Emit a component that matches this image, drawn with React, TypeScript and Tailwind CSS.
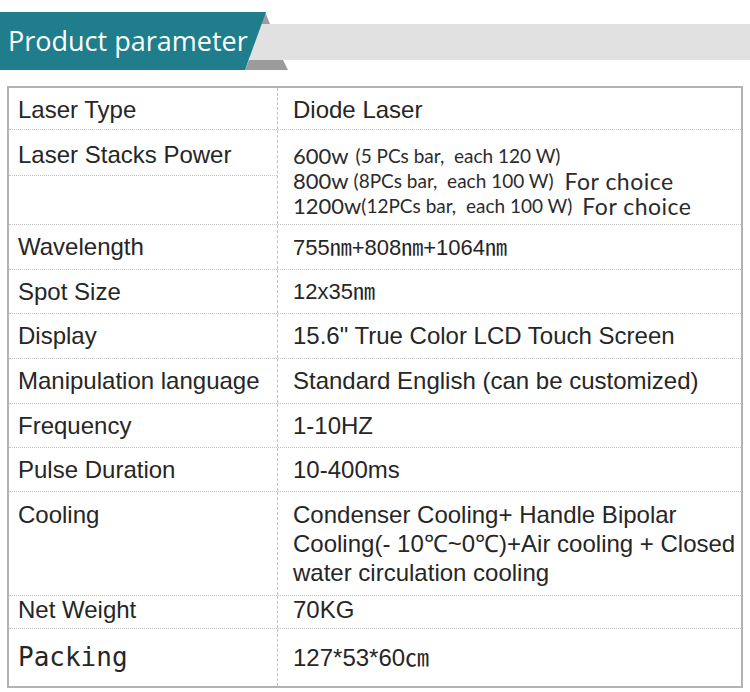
import React from 'react';

const line = 'border-b border-dotted border-[#c2c2c2]';
const left = 'w-[269px] shrink-0 border-r border-dashed border-[#c2c2c2] pl-[9px]';
const right = 'flex-1 pl-[15px]';

interface RowProps {
  label: React.ReactNode;
  value: React.ReactNode;
  h: string;
  last?: boolean;
  valueClass?: string;
  labelClass?: string;
}

const Row = ({ label, value, h, last, valueClass = '', labelClass = '' }: RowProps) => (
  <div className={`flex ${h} ${last ? '' : line}`}>
    <div className={`${left} flex items-center ${labelClass}`}>{label}</div>
    <div className={`${right} flex items-center ${valueClass}`}>{value}</div>
  </div>
);

const Header = () => (
  <div className="relative mt-[12px] h-[58px]">
    <svg className="absolute left-0 top-0" width="750" height="58" viewBox="0 0 750 58">
      <rect x="250" y="12" width="500" height="36" fill="#e1e1e1" />
      <polygon points="265,0 260,12 270,12" fill="#9c9c9c" />
      <polygon points="249,48 283,48 288,58 245,58" fill="#9c9c9c" />
      <polygon points="0,0 266,0 245,58 0,58" fill="#1f7d8c" />
    </svg>
    <div className="relative flex h-full items-center pl-[8px] font-['Open_Sans',sans-serif] text-[27px] text-white">
      Product parameter
    </div>
  </div>
);

export default function App() {
  const calibri = "font-['Lato','Noto_Sans_CJK_SC',sans-serif] text-[#2b2b2b]";
  const pline = 'flex h-[25px] items-center whitespace-nowrap leading-[22px]';
  return (
    <div className="h-[692px] w-[750px] overflow-hidden bg-white font-['Liberation_Sans',Arial,sans-serif] text-[24px] text-[#262626]">
      <Header />
      <div className="ml-[7px] mt-[16px] w-[736px] border-2 border-[#b3b3b3]">
        <Row h="h-[42px]" label="Laser Type" value="Diode Laser" labelClass="pt-[3px]" valueClass="pt-[3px]" />

        <div className={`flex h-[95px] ${line}`}>
          <div className="flex w-[269px] shrink-0 flex-col border-r border-dashed border-[#c2c2c2]">
            <div className={`flex h-[46px] items-center pl-[9px] pt-[4px] ${line}`}>Laser Stacks Power</div>
            <div className="flex-1" />
          </div>
          <div className={`${right} pt-[13px] ${calibri}`}>
            <div className={pline}>
              <span className="text-[22px]">600w</span>
              <span className="ml-[7px] text-[19px]">(5 PCs bar,&nbsp;&nbsp;each 120 W)</span>
            </div>
            <div className={pline}>
              <span className="text-[22px]">800w</span>
              <span className="ml-[5px] text-[19px]">(8PCs bar,&nbsp;&nbsp;each 100 W)</span>
              <span className="ml-[11px] text-[23px] tracking-[0.5px]">For choice</span>
            </div>
            <div className={pline}>
              <span className="text-[22px]">1200w</span>
              <span className="text-[19px]">(12PCs bar,&nbsp;&nbsp;each 100 W)</span>
              <span className="ml-[10px] text-[23px] tracking-[0.5px]">For choice</span>
            </div>
          </div>
        </div>

        <Row
          h="h-[45px]"
          label="Wavelength"
          value="755㎚+808㎚+1064㎚"
          valueClass="text-[22px] font-['Liberation_Sans','Noto_Sans_CJK_SC',sans-serif]"
        />
        <Row
          h="h-[44px]"
          label="Spot Size"
          value="12x35㎚"
          valueClass="text-[22px] font-['Liberation_Sans','Noto_Sans_CJK_SC',sans-serif]"
        />
        <Row h="h-[45px]" label="Display" value={'15.6" True Color LCD Touch Screen'} />
        <Row h="h-[45px]" label="Manipulation language" value="Standard English (can be customized)" />
        <Row h="h-[44px]" label="Frequency" value="1-10HZ" />
        <Row h="h-[44px]" label="Pulse Duration" value="10-400ms" />

        <div className={`flex h-[104px] ${line}`}>
          <div className={`${left} pt-[8px] leading-[29px]`}>Cooling</div>
          <div className={`${right} pt-[8px] leading-[29px] whitespace-nowrap`}>
            <div>Condenser Cooling+ Handle Bipolar</div>
            <div>Cooling(- 10℃~0℃)+Air cooling + Closed</div>
            <div>water circulation cooling</div>
          </div>
        </div>

        <Row h="h-[33px]" label="Net Weight" value="70KG" labelClass="pb-[4px]" valueClass="pb-[4px]" />
        <Row
          h="h-[57px]"
          last
          label={<span className="font-['DejaVu_Sans_Mono',monospace] text-[26px]">Packing</span>}
          value="127*53*60㎝"
          valueClass="font-['Liberation_Sans','Noto_Sans_CJK_SC',sans-serif]"
        />
      </div>
    </div>
  );
}
